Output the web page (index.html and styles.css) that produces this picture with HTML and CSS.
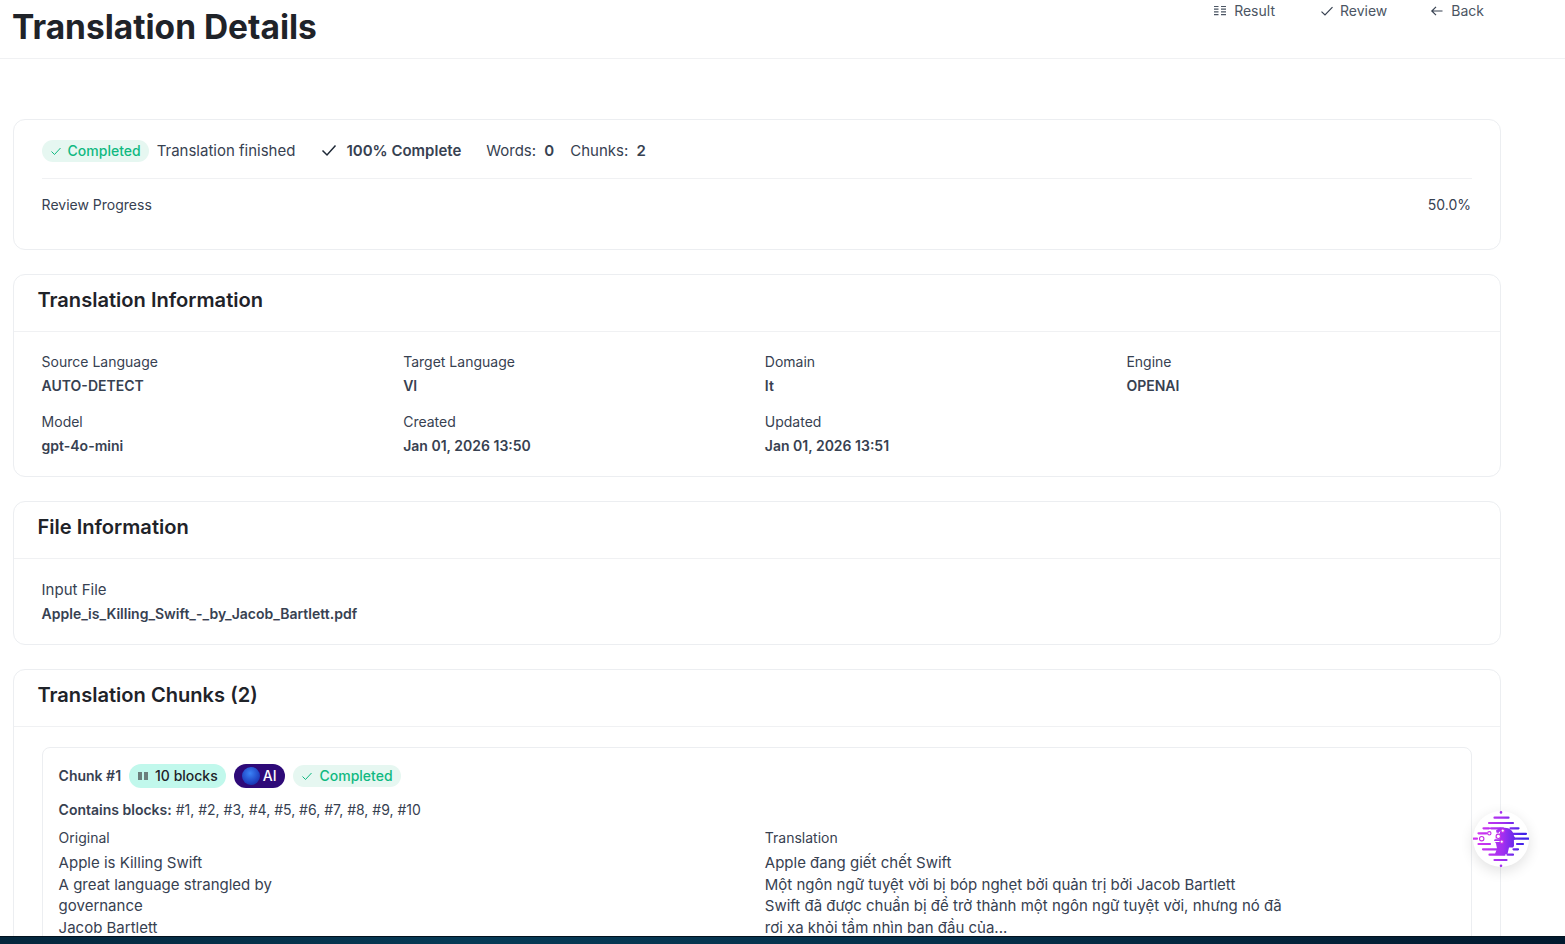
FILE: index.html
```html
<!DOCTYPE html>
<html lang="en">
<head>
<meta charset="utf-8">
<title>Translation Details</title>
<link rel="stylesheet" href="styles.css">
</head>
<body>
<div class="app">
  <header class="topbar">
    <h1 class="title">Translation Details</h1>
    <nav class="actions">
      <a class="action action-result">
        <svg class="ic" viewBox="0 0 14 14" fill="none" stroke="#4b5563" stroke-width="1.2"><path d="M1 2.500h4.500M1 5.200h4.500M1 7.900h4.500M1 10.600h4.500M8 2.500h5M8 5.200h5M8 7.900h5M8 10.600h5"/></svg>
        Result</a>
      <a class="action action-review">
        <svg class="ic" viewBox="0 0 14 14" fill="none" stroke="#374151" stroke-width="1.2"><path d="M1.500 7.600 5 11 12.500 3.200"/></svg>
        Review</a>
      <a class="action action-back">
        <svg class="ic" viewBox="0 0 14 14" fill="none" stroke="#374151" stroke-width="1.2"><path d="M12.500 7H1.800M6 2.800 1.800 7 6 11.200"/></svg>
        Back</a>
    </nav>
  </header>
  <main class="content">
    <section class="card card-status">
      <div class="status-row">
        <span class="badge badge-done">
          <svg class="ic-sm" viewBox="0 0 12 12" fill="none" stroke="#10b981" stroke-width="1"><path d="M1.500 6.500 4.500 9.500 10.500 3"/></svg>
          Completed</span>
        <span class="status-msg">Translation finished</span>
        <span class="status-pct">
          <svg class="ic-pct" viewBox="0 0 16 16" fill="none" stroke="#1f2937" stroke-width="1.500"><path d="M1.500 8.500 6 13 14.500 3.500"/></svg>
          100% Complete</span>
        <span class="stat">Words: <b>0</b></span>
        <span class="stat stat-chunks">Chunks: <b>2</b></span>
      </div>
      <div class="progress-row">
        <span>Review Progress</span>
        <span class="progress-val">50.0%</span>
      </div>
    </section>

    <section class="card">
      <h2 class="card-title">Translation Information</h2>
      <div class="info-grid">
        <div class="field"><span class="label">Source Language</span><strong class="value">AUTO-DETECT</strong></div>
        <div class="field"><span class="label">Target Language</span><strong class="value">VI</strong></div>
        <div class="field"><span class="label">Domain</span><strong class="value">It</strong></div>
        <div class="field"><span class="label">Engine</span><strong class="value">OPENAI</strong></div>
        <div class="field"><span class="label">Model</span><strong class="value">gpt-4o-mini</strong></div>
        <div class="field"><span class="label">Created</span><strong class="value">Jan 01, 2026 13:50</strong></div>
        <div class="field"><span class="label">Updated</span><strong class="value">Jan 01, 2026 13:51</strong></div>
      </div>
    </section>

    <section class="card">
      <h2 class="card-title">File Information</h2>
      <div class="file-body">
        <div class="field"><span class="label label-file">Input File</span><strong class="value">Apple_is_Killing_Swift_-_by_Jacob_Bartlett.pdf</strong></div>
      </div>
    </section>

    <section class="card">
      <h2 class="card-title">Translation Chunks (2)</h2>
      <div class="chunks">
        <article class="chunk">
          <div class="chunk-head">
            <span class="chunk-name">Chunk #1</span>
            <span class="badge badge-blocks">
              <svg class="ic-blocks" viewBox="0 0 10 8" fill="#6b7f7c"><rect x="0" y="0" width="4" height="8"/><rect x="6" y="0" width="4" height="8"/></svg>
              10 blocks</span>
            <span class="badge badge-ai"><span class="orb"></span>AI</span>
            <span class="badge badge-done">
              <svg class="ic-sm" viewBox="0 0 12 12" fill="none" stroke="#10b981" stroke-width="1"><path d="M1.500 6.500 4.500 9.500 10.500 3"/></svg>
              Completed</span>
          </div>
          <p class="contains"><b>Contains blocks:</b> #1, #2, #3, #4, #5, #6, #7, #8, #9, #10</p>
          <div class="compare">
            <div>
              <div class="col-label">Original</div>
              <p class="col-text">Apple is Killing Swift<br>A great language strangled by<br>governance<br>Jacob Bartlett</p>
            </div>
            <div>
              <div class="col-label">Translation</div>
              <p class="col-text">Apple đang giết chết Swift<br>Một ngôn ngữ tuyệt vời bị bóp nghẹt bởi quản trị bởi Jacob Bartlett<br>Swift đã được chuẩn bị để trở thành một ngôn ngữ tuyệt vời, nhưng nó đã<br>rơi xa khỏi tầm nhìn ban đầu của...</p>
            </div>
          </div>
        </article>
      </div>
    </section>
  </main>
  <div class="fab">
    <svg viewBox="0 0 56 56" width="56" height="56" fill="none">
      <defs>
        <linearGradient id="g" gradientUnits="userSpaceOnUse" x1="6" y1="0" x2="50" y2="0"><stop offset="0" stop-color="#d035f0"/><stop offset=".55" stop-color="#a030f0"/><stop offset="1" stop-color="#3f22e8"/></linearGradient>
      </defs>
      <path stroke="url(#g)" stroke-width="2.200" stroke-linecap="round" d="M21.500 6.700h14M16 12h24M10.500 17.300h5.500M18 17.300h12M37.500 17.300h8M5.500 22.300h8M40 22.800h13M.5 27.700h3.500M40 27.700h15.500M5.500 33h11.500M44 33h6M10 38.300h18M40.500 38.300h4.500M16.500 43.700h15M34.500 43.700h5.500M21.500 49h12"/>
      <path stroke="url(#g)" stroke-width="2.600" stroke-linecap="round" d="M28 1.300v.1M28 54.700v.1"/>
      <path fill="url(#g)" d="M29 17c6 -1.500 11.500 2 12 8l1.800 3-1.900 1 .1 6-1 1.500-4 .1-1.500 6.500H22l2-5.500-1-5-2-3 3-6-1-4 4-3z"/>
      <path stroke="#fff" stroke-width="1" d="M18 22.300h8.500M10.500 27.700 24 26M10.500 27.700h16M27 20.500l-2 3.500M27 30.500h-8"/>
      <g fill="#fff" stroke="#c52ee6" stroke-width="1.100">
        <circle cx="16.300" cy="22.300" r="1.700"/><circle cx="29.700" cy="19.700" r="1.700"/><circle cx="25.300" cy="25.300" r="2.200"/><circle cx="8.700" cy="27.700" r="2.200"/><circle cx="28.700" cy="30.700" r="1.700"/>
      </g>
    </svg>
  </div>
</div>
<div class="dock"></div>
</body>
</html>
```

FILE: styles.css
```css
* { box-sizing: border-box; }
html, body { margin: 0; padding: 0; height: 100%; overflow: hidden; background: #fff; }
body { font-family: Inter, "Noto Sans", sans-serif; color: #374151; font-size: 14px; display: flex; flex-direction: column; }
.app { position: relative; height: 936px; overflow: hidden; flex: none; }
.topbar { height: 59px; border-bottom: 1px solid #f0f1f3; display: flex; justify-content: space-between; align-items: flex-start; padding-left: 12px; padding-right: 81px; }
.title { margin: 7px 0 0; font-size: 33.500px; line-height: 40px; font-weight: 700; color: #1f2329; }
.actions { display: flex; margin-top: 2px; }
.action { display: inline-flex; align-items: center; gap: 7px; font-size: 14px; line-height: 18px; color: #4b5563; font-weight: 400; }
.action-result { margin-right: 45px; }
.action-review { margin-right: 43px; gap: 6px; }
.ic { width: 14px; height: 14px; flex: none; }
.content { padding: 60px 64px 0 13px; display: flex; flex-direction: column; gap: 24px; }
.card { border: 1px solid #eceef1; border-radius: 12px; background: #fff; flex: none; }
.card-status { height: 131px; padding: 20px 28px 0 27.600px; }
.status-row { display: flex; align-items: center; height: 22px; font-size: 15px; }
.badge { display: inline-flex; align-items: center; border-radius: 999px; font-size: 14px; line-height: 20px; white-space: nowrap; font-weight: 500; }
.badge-done { background: #e6f7f1; color: #10b981; height: 22px; padding: 0 8px; gap: 6px; }
.ic-sm { width: 12px; height: 12px; }
.status-msg { margin-left: 8px; margin-bottom: 2px; color: #374151; }
.status-pct { margin-left: 26px; margin-bottom: 2px; display: inline-flex; align-items: center; gap: 9px; font-weight: 600; color: #374151; }
.ic-pct { width: 16px; height: 16px; }
.stat { margin-left: 25px; margin-bottom: 2px; }
.stat b { font-weight: 600; margin-left: 4px; }
.stat-chunks { margin-left: 16px; }
.progress-row { margin-top: 16px; border-top: 1px solid #f0f1f3; padding-top: 17px; display: flex; justify-content: space-between; font-size: 14px; line-height: 18px; }
.progress-val { margin-right: 1px; }
.card-title { margin: 0; height: 57px; border-bottom: 1px solid #f0f1f3; padding: 0 23px 7px 23.400px; display: flex; align-items: center; font-size: 20.100px; font-weight: 600; color: #1f2329; }
.info-grid { display: grid; grid-template-columns: repeat(4, 1fr); column-gap: 16px; row-gap: 18px; padding: 21px 28px 21px 27.600px; }
.field { display: flex; flex-direction: column; gap: 6px; }
.label { font-size: 14px; line-height: 18px; color: #374151; }
.label-file { font-size: 15px; }
.value { font-size: 14px; line-height: 18px; font-weight: 600; color: #374151; }
.file-body { padding: 22px 28px 21px 27.600px; }
.chunks { padding: 20px 28px 0; }
.chunk { border: 1px solid #eceef1; border-radius: 8px; padding: 16px 16px 40px 15.600px; }
.chunk-head { display: flex; align-items: center; gap: 8px; height: 24px; }
.chunk-name { font-weight: 600; font-size: 14px; color: #374151; margin-bottom: 2px; }
.badge-blocks { background: #c1f8ec; color: #1f2329; height: 24px; padding: 0 8px 0 9px; gap: 7px; }
.ic-blocks { width: 10px; height: 8px; }
.badge-ai { background: #2e0a78; color: #fff; height: 24px; padding: 0 9px 0 8px; gap: 3px; }
.orb { width: 18px; height: 18px; border-radius: 50%; background: radial-gradient(circle at 45% 35%, #3b82f6, #1d3fbf 65%, #0f2a8f); }
.contains { margin: 13px 0 0; font-size: 14px; line-height: 17px; color: #374151; }
.contains b { font-weight: 600; }
.compare { display: grid; grid-template-columns: 1fr 1fr; column-gap: 16px; margin-top: 11px; }
.col-label { font-size: 14px; line-height: 18px; color: #374151; }
.col-text { margin: 5px 0 0; font-size: 15px; line-height: 21.500px; color: #374151; }
.fab { position: absolute; left: 1473px; top: 811px; width: 56px; height: 56px; border-radius: 50%; background: #fff; box-shadow: 0 4px 14px rgba(0,0,0,.12); }
.dock { height: 8px; flex: none; border-top: 1px solid #02121f; background: linear-gradient(90deg, #04263c, #063a56 30%, #05304a 60%, #02192e); }
```
